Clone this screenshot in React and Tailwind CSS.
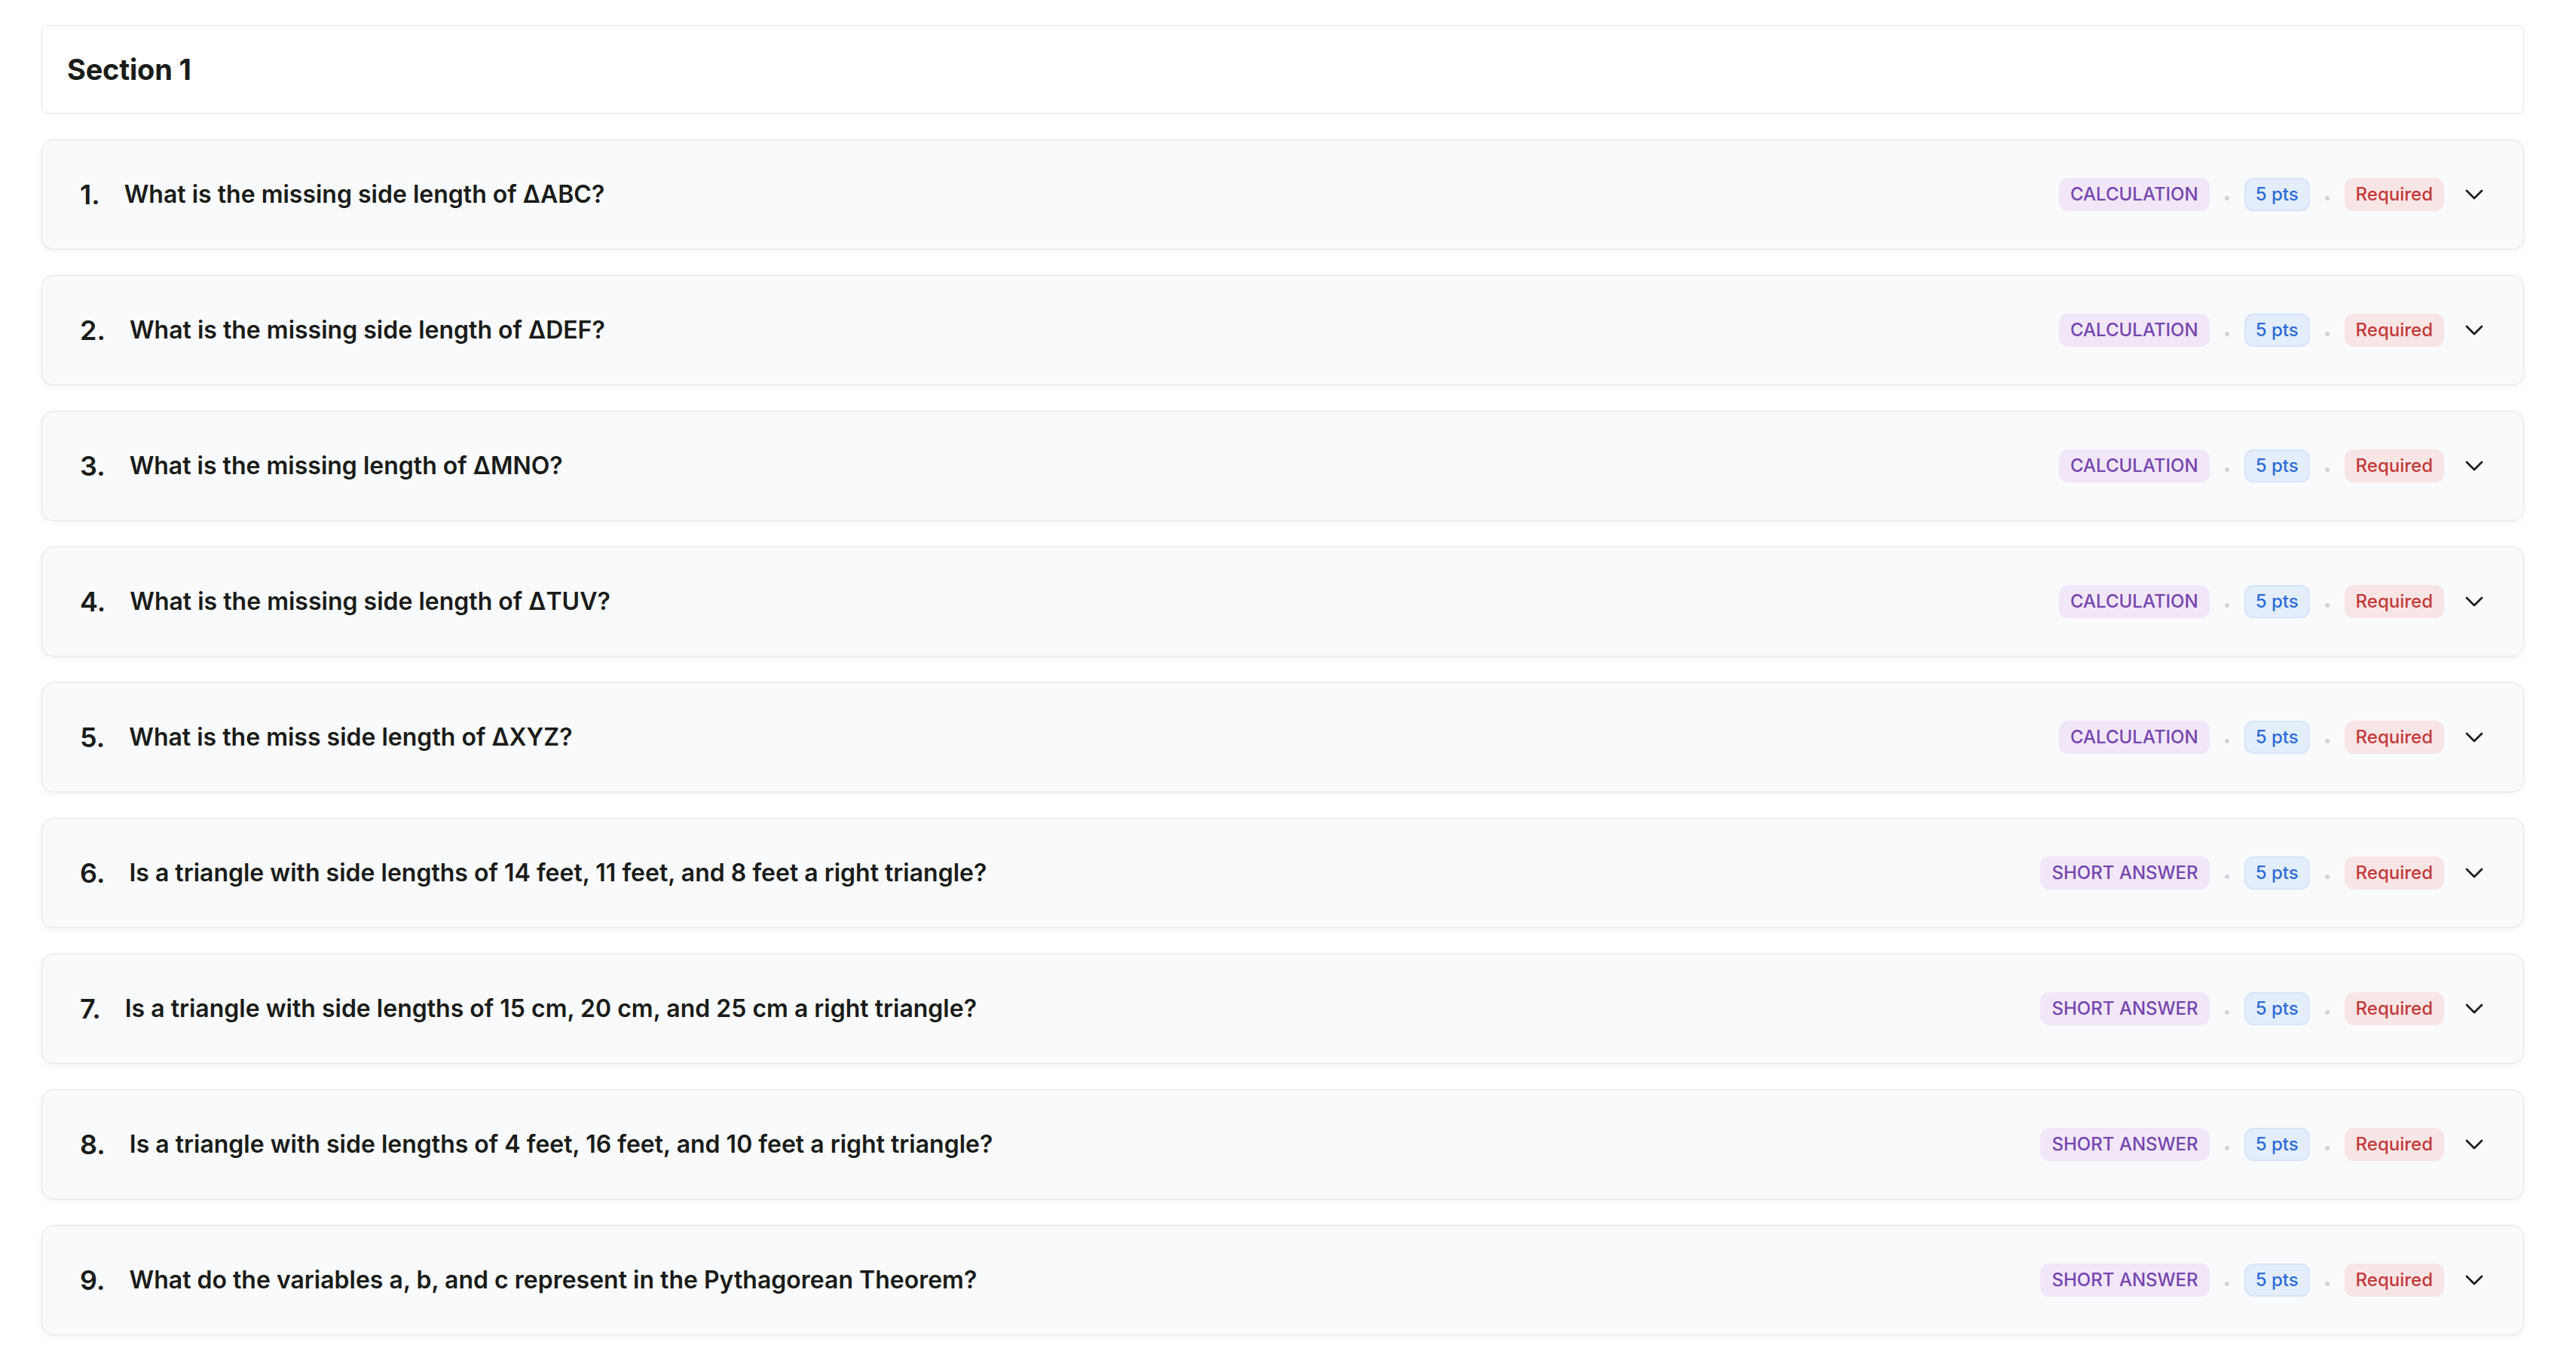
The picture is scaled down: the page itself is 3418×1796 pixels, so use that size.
import { ChevronDown } from 'lucide-react'

const questions = [
  { text: 'What is the missing side length of ΔABC?', type: 'CALCULATION' },
  { text: 'What is the missing side length of ΔDEF?', type: 'CALCULATION' },
  { text: 'What is the missing length of ΔMNO?', type: 'CALCULATION' },
  { text: 'What is the missing side length of ΔTUV?', type: 'CALCULATION' },
  { text: 'What is the miss side length of ΔXYZ?', type: 'CALCULATION' },
  { text: 'Is a triangle with side lengths of 14 feet, 11 feet, and 8 feet a right triangle?', type: 'SHORT ANSWER' },
  { text: 'Is a triangle with side lengths of 15 cm, 20 cm, and 25 cm a right triangle?', type: 'SHORT ANSWER' },
  { text: 'Is a triangle with side lengths of 4 feet, 16 feet, and 10 feet a right triangle?', type: 'SHORT ANSWER' },
  { text: 'What do the variables a, b, and c represent in the Pythagorean Theorem?', type: 'SHORT ANSWER' },
]

function Dot() {
  return <span className="mt-[10px] h-[6px] w-[6px] rounded-full bg-[#d1d3d8]" />
}

function QuestionRow({ index, text, type }) {
  return (
    <div className="flex items-center justify-between rounded-[16px] border border-[#e5e6ea] bg-[#f9fafb] py-[48px] pl-[50px] pr-[45px] shadow-[0_2px_8px_rgba(0,0,0,0.06)]">
      <div className="flex items-center leading-[48px] text-[#1a1c19]">
        <span className="mr-[32px] text-[36px] font-semibold">{index}.</span>
        <span className="text-[32px] font-semibold">{text}</span>
      </div>

      <div className="flex items-center gap-[20px] text-[24px] font-medium leading-[32px]">
        <span className="rounded-[12px] bg-[#f1e7f9] px-[15px] py-[6px] text-[#7646ad]">{type}</span>
        <Dot />
        <span className="rounded-[12px] border-2 border-[#d7e5fa] bg-[#e4eefb] px-[13px] py-[4px] text-[#2d6dd6]">
          5 pts
        </span>
        <Dot />
        <span className="rounded-[12px] bg-[#f8e5e5] px-[15px] py-[6px] text-[#c23a3a]">Required</span>
        <ChevronDown size={40} strokeWidth={1.6} className="text-[#1a1c19]" />
      </div>
    </div>
  )
}

export default function App() {
  return (
    <div
      className="min-h-screen bg-white pb-[24px] pl-[55px] pr-[69px] pt-[33px]"
      style={{ fontFamily: 'Inter, "Noto Sans", sans-serif' }}
    >
      <div className="flex flex-col gap-[34px]">
        <div className="rounded-[8px] border border-[#e5e6ea] bg-white px-[33px] py-[30px]">
          <h1 className="text-[38px] font-bold leading-[56px] tracking-[-0.2px] text-[#1a1c19]">Section 1</h1>
        </div>

        {questions.map((q, i) => (
          <QuestionRow key={i} index={i + 1} text={q.text} type={q.type} />
        ))}
      </div>
    </div>
  )
}
